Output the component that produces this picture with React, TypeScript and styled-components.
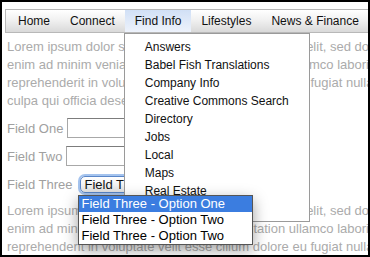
import styled, { createGlobalStyle } from "styled-components";

const Global = createGlobalStyle`
  html, body {
    margin: 0;
    padding: 0;
    background: #fff;
  }
  body {
    font-family: "Liberation Sans", Arial, sans-serif;
  }
`;

const Frame = styled.div`
  width: 370px;
  height: 257px;
  box-sizing: border-box;
  border: 2px solid #000;
  background: #fff;
  overflow: hidden;
  padding: 7px 0 0 3px;
`;

const Nav = styled.ul`
  display: flex;
  list-style: none;
  margin: 0;
  padding: 0 0 0 2px;
  width: 420px;
  height: 24px;
  box-sizing: border-box;
  border: 1px solid #b8b8b8;
  background: linear-gradient(#ffffff, #f1f1f1 45%, #d9d9d9);
`;

const NavItem = styled.li<{ $active?: boolean }>`
  position: relative;
  padding: 0 10px;
  line-height: 22px;
  font-size: 12px;
  color: #111;
  white-space: nowrap;
  background: ${({ $active }) =>
    $active ? "linear-gradient(#d1e0f6, #e2ebf9 60%, #edf2fb)" : "transparent"};
`;

const Menu = styled.ul`
  position: absolute;
  z-index: 10;
  top: calc(100% + 1px);
  left: -1px;
  width: 186px;
  box-sizing: border-box;
  margin: 0;
  padding: 4px 0 3px;
  list-style: none;
  background: #fff;
  border: 1px solid #9a9a9a;
`;

const MenuItem = styled.li`
  padding-left: 20px;
  line-height: 18px;
  font-size: 12px;
  color: #111;
`;

const Para = styled.div<{ $top: number }>`
  margin-top: ${({ $top }) => $top}px;
  padding-left: 2px;
  font-size: 13px;
  line-height: 18px;
  color: #ababab;
`;

const Line = styled.div`
  white-space: nowrap;
`;

const Form = styled.div`
  margin-top: 8px;
  padding-left: 2px;
  display: flex;
  flex-direction: column;
  gap: 8px;
`;

const Row = styled.div`
  display: flex;
  align-items: center;
  gap: 4px;
  height: 20px;
`;

const Label = styled.span`
  font-size: 13px;
  color: #a0a0a0;
  white-space: nowrap;
`;

const Input = styled.div`
  width: 150px;
  height: 20px;
  box-sizing: border-box;
  background: #fff;
  border: 1px solid #a8a8a8;
  border-top-color: #7c7c7c;
`;

const SelectWrap = styled.div`
  position: relative;
  margin-left: 3px;
`;

const SelectButton = styled.div`
  height: 17px;
  width: 170px;
  box-sizing: border-box;
  padding-left: 4px;
  border: 1px solid #5a86c8;
  border-radius: 5px;
  box-shadow: 0 0 0 2px #a4c3ee;
  background: linear-gradient(#ffffff, #f3f3f3 50%, #e2e2e2);
  font-size: 13px;
  line-height: 15px;
  color: #111;
  white-space: nowrap;
`;

const Popup = styled.ul`
  position: absolute;
  z-index: 20;
  top: calc(100% + 2px);
  left: -2px;
  width: 175px;
  margin: 0;
  padding: 0;
  list-style: none;
  box-sizing: border-box;
  background: #fff;
  border: 1px solid #555;
  box-shadow: 0 5px 14px rgba(0, 0, 0, 0.38);
`;

const Option = styled.li<{ $selected?: boolean }>`
  height: 16px;
  padding-left: 3px;
  font-size: 13px;
  line-height: 16px;
  white-space: nowrap;
  color: ${({ $selected }) => ($selected ? "#fff" : "#000")};
  background: ${({ $selected }) => ($selected ? "#3b7de0" : "#fff")};
`;

const lorem = [
  "Lorem ipsum dolor sit amet, consectetur adipisicing elit, sed do",
  "enim ad minim veniam, quis nostrud exercitation ullamco laboris nisi ut",
  "reprehenderit in voluptate velit esse cillum dolore eu fugiat nulla pariatur.",
  "culpa qui officia deserunt mollit anim id est laborum.",
];

const navItems = ["Home", "Connect", "Find Info", "Lifestyles", "News & Finance"];

const menuItems = [
  "Answers",
  "Babel Fish Translations",
  "Company Info",
  "Creative Commons Search",
  "Directory",
  "Jobs",
  "Local",
  "Maps",
  "Real Estate",
  "Shopping",
];

const options = [
  "Field Three - Option One",
  "Field Three - Option Two",
  "Field Three - Option Two",
];

export default function App() {
  return (
    <>
      <Global />
      <Frame>
        <Nav>
          {navItems.map((item) => (
            <NavItem key={item} $active={item === "Find Info"}>
              {item}
              {item === "Find Info" && (
                <Menu>
                  {menuItems.map((m) => (
                    <MenuItem key={m}>{m}</MenuItem>
                  ))}
                </Menu>
              )}
            </NavItem>
          ))}
        </Nav>

        <Para $top={5}>
          {lorem.map((l, i) => (
            <Line key={i}>{l}</Line>
          ))}
        </Para>

        <Form>
          <Row>
            <Label>Field One</Label>
            <Input />
          </Row>
          <Row>
            <Label>Field Two</Label>
            <Input />
          </Row>
          <Row>
            <Label>Field Three</Label>
            <SelectWrap>
              <SelectButton>Field Three - Option One</SelectButton>
              <Popup>
                {options.map((o, i) => (
                  <Option key={i} $selected={i === 0}>
                    {o}
                  </Option>
                ))}
              </Popup>
            </SelectWrap>
          </Row>
        </Form>

        <Para $top={8}>
          {lorem.map((l, i) => (
            <Line key={i}>{l}</Line>
          ))}
        </Para>
      </Frame>
    </>
  );
}
